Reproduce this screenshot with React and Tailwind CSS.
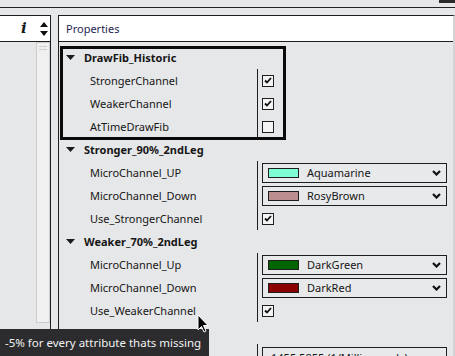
import React from "react";

const Tri = () => (
  <svg width="9" height="5" viewBox="0 0 9 5" className="block">
    <path d="M0 0 L9 0 L4.5 5 Z" fill="#1a1a1a" />
  </svg>
);

const Check = ({ checked }) => (
  <div className="w-[12px] h-[12px] border border-[#1e1e1e] bg-[#f4f4f4] flex items-center justify-center">
    {checked && (
      <svg width="8" height="7" viewBox="0 0 8 7" className="block">
        <path d="M1 3.5 L3 5.5 L7 1" stroke="#111" strokeWidth="1.8" fill="none" />
      </svg>
    )}
  </div>
);

const Chevron = () => (
  <svg width="9" height="6" viewBox="0 0 9 6" className="block">
    <path d="M1 1 L4.5 4.5 L8 1" stroke="#111" strokeWidth="2.2" fill="none" />
  </svg>
);

const Drop = ({ color, name }) => (
  <div className="w-[185px] h-[20px] border border-[#1e1e1e] bg-[#e8e9eb] flex items-center pl-[5px] pr-[5px]">
    <div className="w-[31px] h-[10px] border border-[#1e1e1e]" style={{ background: color }} />
    <span className="ml-[8px] flex-1 leading-none">{name}</span>
    <Chevron />
  </div>
);

const Group = ({ title }) => (
  <div className="h-[23px] shrink-0 flex items-center pl-[7px]">
    <Tri />
    <span className="ml-[9px] font-bold leading-none">{title}</span>
  </div>
);

const Row = ({ label, children }) => (
  <div className="h-[23px] shrink-0 flex">
    <div className="w-[198px] flex items-center pl-[31px] leading-none whitespace-nowrap">{label}</div>
    <div className="w-px bg-[#1e1e1e]" />
    <div className="flex-1 flex items-center pl-[4px]">{children}</div>
  </div>
);

export default function App() {
  return (
    <div className="relative w-[455px] h-[356px] overflow-hidden bg-[#e6e7e9] text-[11px] text-[#161616] font-['Noto_Sans',sans-serif]">
      <div className="h-[7px] flex justify-end">
        <div className="w-[16px] h-[3px] bg-[#2a2a2a]" />
      </div>
      <div className="h-px bg-[#222]" />
      <div className="h-[7px]" />
      <div className="flex h-[341px]">
        {/* left panel */}
        <div className="w-[51px] shrink-0 border-t border-r border-[#1e1e1e] flex flex-col overflow-hidden">
          <div className="h-[26px] shrink-0 bg-white border-b border-[#1e1e1e] flex items-center">
            <span className="ml-[21px] w-[10px] font-['DejaVu_Serif',serif] italic font-bold text-[15px] leading-none">i</span>
            <div className="ml-[9px] flex flex-col gap-[4px]">
              <svg width="8" height="5" viewBox="0 0 8 5" className="block"><path d="M0 5 L4 0 L8 5 Z" fill="#111" /></svg>
              <svg width="8" height="5" viewBox="0 0 8 5" className="block"><path d="M0 0 L4 5 L8 0 Z" fill="#111" /></svg>
            </div>
          </div>
          <div className="flex justify-end shrink-0">
            <div className="w-[14px] h-[281px] bg-[#f0f0f0] border border-[#cdcdcd] flex flex-col items-center pt-[3px] gap-[2px]">
              <div className="w-[8px] h-px bg-[#cfcfcf]" />
              <div className="w-[8px] h-px bg-[#cfcfcf]" />
            </div>
          </div>
        </div>
        <div className="w-[7px] shrink-0" />
        {/* right panel */}
        <div className="flex-1 border-t border-l border-[#1e1e1e] flex flex-col border-r-2 border-r-[#d2d3d5] overflow-hidden">
          <div className="h-[26px] shrink-0 bg-white border-b border-[#1e1e1e] flex items-center pl-[7px]">
            <span className="text-[#1f1f52] leading-none">Properties</span>
          </div>
          <div className="pt-[4px] shrink-0 flex flex-col">
            <Group title="DrawFib_Historic" />
            <Row label="StrongerChannel"><Check checked /></Row>
            <Row label="WeakerChannel"><Check checked /></Row>
            <Row label="AtTimeDrawFib"><Check /></Row>
            <Group title="Stronger_90%_2ndLeg" />
            <Row label="MicroChannel_UP"><Drop color="#7fffd4" name="Aquamarine" /></Row>
            <Row label="MicroChannel_Down"><Drop color="#bc8f8f" name="RosyBrown" /></Row>
            <Row label="Use_StrongerChannel"><Check checked /></Row>
            <Group title="Weaker_70%_2ndLeg" />
            <Row label="MicroChannel_Up"><Drop color="#006400" name="DarkGreen" /></Row>
            <Row label="MicroChannel_Down"><Drop color="#8b0000" name="DarkRed" /></Row>
            <Row label="Use_WeakerChannel"><Check checked /></Row>
            <div className="h-[22px] shrink-0" />
            <Row label="">
              <div className="w-[185px] h-[20px] mt-[3px] border border-[#1e1e1e] bg-[#e8e9eb] pl-[8px] leading-none pt-[4px] whitespace-nowrap">1455.5855 (1/Milliseconds)</div>
            </Row>
          </div>
        </div>
      </div>

      {/* highlight box overlay */}
      <div className="absolute left-[60px] top-[46px] w-[226px] h-[94px] border-[3px] border-[#0a0a0a]" />

      {/* tooltip */}
      <div className="absolute left-0 top-[329px] w-[209px] h-[27px] bg-[#2c2c2e] text-[#f2f2f2] flex items-center pl-[5px] text-[11.5px] leading-none whitespace-nowrap">
        -5% for every attribute thats missing
      </div>

      {/* cursor */}
      <svg className="absolute left-[197px] top-[314px]" width="13" height="20" viewBox="0 0 13 20">
        <path d="M1 1 L1 16 L4.5 12.5 L7 18 L9 17 L6.5 11.5 L11 11.5 Z" fill="#000" stroke="#fff" strokeWidth="1" strokeLinejoin="round" />
      </svg>
    </div>
  );
}
